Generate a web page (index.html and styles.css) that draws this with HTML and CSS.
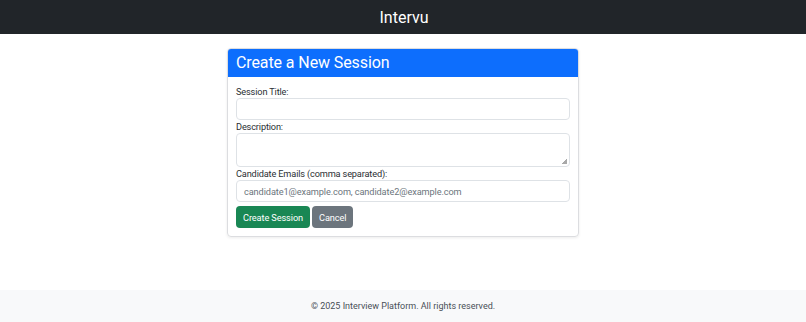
FILE: index.html
```html
<!DOCTYPE html>
<html lang="en">
<head>
<meta charset="UTF-8" />
<meta name="viewport" content="width=device-width, initial-scale=1" />
<title>Intervu - Create Session</title>
<link rel="stylesheet" href="styles.css">
</head>
<body>
  <nav class="navbar">
    <span class="brand">Intervu</span>
  </nav>

  <main class="page">
    <div class="card">
      <div class="card-header">Create a New Session</div>
      <form class="card-body">
        <div class="field">
          <label for="title">Session Title:</label>
          <input type="text" id="title" class="control">
        </div>
        <div class="field">
          <label for="desc">Description:</label>
          <textarea id="desc" class="control area"></textarea>
        </div>
        <div class="field">
          <label for="emails">Candidate Emails (comma separated):</label>
          <input type="text" id="emails" class="control" placeholder="candidate1@example.com, candidate2@example.com">
        </div>
        <div class="actions">
          <button type="submit" class="btn btn-success">Create Session</button>
          <button type="button" class="btn btn-secondary">Cancel</button>
        </div>
      </form>
    </div>
  </main>

  <footer class="footer">
    &copy; 2025 Interview Platform. All rights reserved.
  </footer>
</body>
</html>
```

FILE: styles.css
```css
body {
  margin: 0;
  font-family: Roboto, sans-serif;
  color: #212529;
  background: #fff;
  min-height: 322px;
  display: flex;
  flex-direction: column;
}

/* Navbar */
.navbar {
  height: 34px;
  background-color: #212529;
  display: flex;
  justify-content: center;
  align-items: center;
}

.brand {
  color: #fff;
  font-size: 16px;
  padding-left: 2px;
}

/* Main */
.page {
  flex: 1;
  display: flex;
  justify-content: center;
  align-items: flex-start;
  padding-top: 14px;
}

.card {
  width: 352px;
  border: 1px solid #dcdde0;
  border-radius: 4px;
  box-shadow: 0 1px 3px rgba(0,0,0,0.08);
  overflow: hidden;
  box-sizing: border-box;
}

.card-header {
  height: 28px;
  background-color: #0d6efd;
  color: #fff;
  font-size: 16px;
  letter-spacing: -0.1px;
  line-height: 28px;
  padding: 0 8px;
}

.card-body {
  padding: 9px 8px 8px;
  display: flex;
  flex-direction: column;
  gap: 1px;
}

.field {
  display: flex;
  flex-direction: column;
}

.field label {
  font-size: 9.2px;
  letter-spacing: -0.15px;
  line-height: 12px;
  margin-bottom: 0;
  color: #2b2f33;
}

.control {
  box-sizing: border-box;
  height: 22px;
  border: 1px solid #dee2e6;
  border-radius: 4px;
  padding: 0 7px;
  font-family: Roboto, sans-serif;
  font-size: 9.2px;
  letter-spacing: -0.1px;
  color: #212529;
  background: #fff;
}

.control::placeholder {
  color: #6c757d;
}

/* textarea with a small triangle grip like the screenshot */
.area {
  height: 34px;
  resize: none;
  background: #fff linear-gradient(135deg, transparent 50%, #a9a9a9 50%) no-repeat right 2px bottom 2px / 5px 5px;
}

.actions {
  display: flex;
  gap: 2px;
  margin-top: 3px;
}

.btn {
  height: 22px;
  border: none;
  border-radius: 4px;
  padding: 0 7px;
  font-family: Roboto, sans-serif;
  font-size: 9.2px;
  letter-spacing: -0.1px;
  color: #fff;
}

.btn-success {
  background-color: #198754;
}

.btn-secondary {
  background-color: #6c757d;
}

/* Footer */
.footer {
  height: 32px;
  background-color: #f8f9fa;
  color: #495057;
  font-size: 9px;
  display: flex;
  justify-content: center;
  align-items: center;
}
```
